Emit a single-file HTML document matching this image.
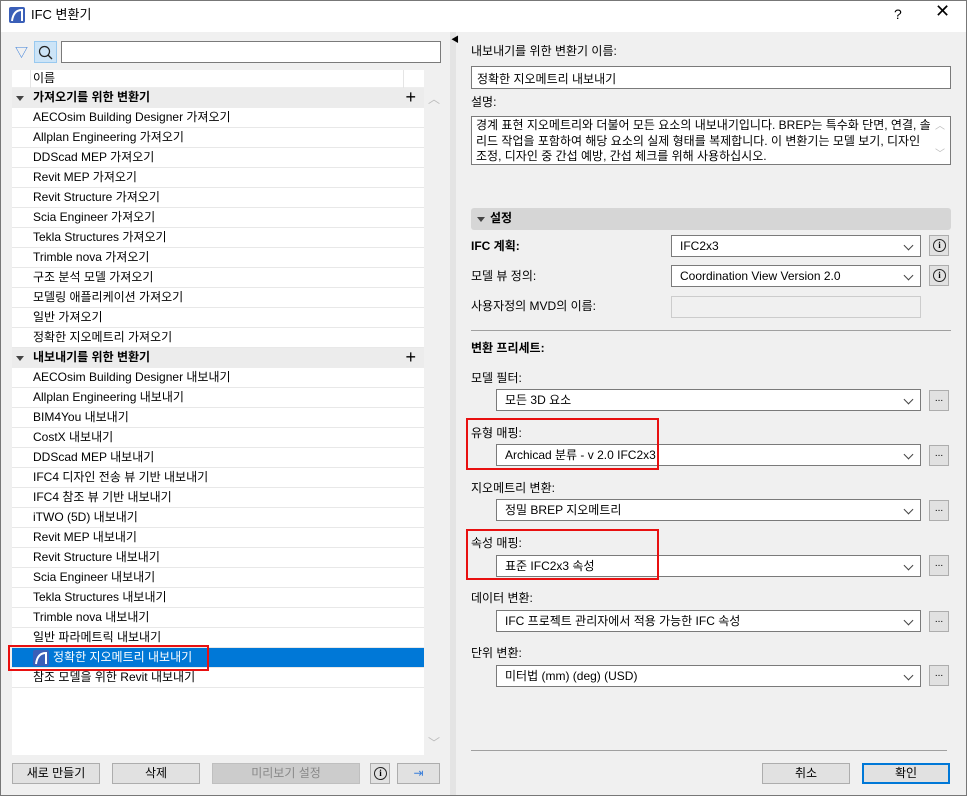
<!DOCTYPE html>
<html><head><meta charset="utf-8"><style>
*{box-sizing:border-box;margin:0;padding:0}
body{width:967px;height:796px;background:#f0f0f0;font-family:"Liberation Sans","Noto Sans CJK KR",sans-serif;font-size:12px;color:#000;position:relative;overflow:hidden}
.frame{position:absolute;left:0;top:0;width:967px;height:796px;border:1px solid #777;pointer-events:none}
.a{position:absolute}
.t{position:absolute;white-space:nowrap;line-height:14px}
.inp{position:absolute;background:#fff;border:1px solid #7a7a7a}
.sel{position:absolute;background:#fff;border:1px solid #7a7a7a;padding:4px 0 0 8px;line-height:13px;white-space:nowrap}
.sel:after{content:"";position:absolute;right:8px;top:6px;width:6px;height:6px;border-right:1px solid #444;border-bottom:1px solid #444;transform:rotate(45deg)}
.btn{position:absolute;background:#e1e1e1;border:1px solid #adadad;text-align:center;line-height:19px}
.dot{position:absolute;background:#e1e1e1;border:1px solid #adadad;text-align:center;font-size:10px;line-height:16px;width:20px;height:21px}
.info{position:absolute;background:#e1e1e1;border:1px solid #adadad;width:20px;height:21px}
.info:after{content:"i";position:absolute;left:3px;top:3px;width:13px;height:13px;border:1.5px solid #222;border-radius:50%;box-sizing:border-box;font:bold 9px "Liberation Serif",serif;text-align:center;line-height:10px}
.row{position:absolute;left:12px;width:412px;height:20px;border-bottom:1px solid #e8e8e8;padding-left:21px;line-height:19px;white-space:nowrap}
.grp{position:absolute;left:12px;width:412px;height:20px;background:#ececec;font-weight:bold;padding-left:21px;line-height:19px}
.grp:before{content:"";position:absolute;left:4px;top:8px;border:4px solid transparent;border-top:5px solid #444}
.plus{position:absolute;right:8px;top:0;font-weight:normal;font-size:18px;line-height:18px}
.red{position:absolute;border:2px solid #e81010}
</style></head><body>
<div class="a" style="left:0;top:0;width:967px;height:32px;background:#fff"></div>
<svg class="a" style="left:9px;top:7px" width="16" height="16"><rect width="16" height="16" rx="2" fill="#3a5fb8"/><path d="M3 14 C4 6 8 3 13 3 L13 14" fill="none" stroke="#fff" stroke-width="2"/></svg>
<div class="t" style="left:31px;top:8px;font-size:13px">IFC 변환기</div>
<div class="t" style="left:894px;top:7px;font-size:14px">?</div>
<div class="t" style="left:935px;top:4px;font-size:18px">✕</div>

<div class="t" style="left:15px;top:46px;color:#3b7fd9;font-size:13px">▽</div>
<div class="a" style="left:34px;top:41px;width:23px;height:22px;background:#cce4f7;border:1px solid #99c9ef"></div>
<svg class="a" style="left:38px;top:45px" width="16" height="16"><circle cx="6.5" cy="6.5" r="5" fill="none" stroke="#222" stroke-width="1.2"/><path d="M10 10 L14 14" stroke="#222" stroke-width="1.3"/></svg>
<div class="inp" style="left:61px;top:41px;width:380px;height:22px"></div>

<div class="a" style="left:12px;top:70px;width:412px;height:685px;background:#fff"></div>
<div class="a" style="left:424px;top:88px;width:16px;height:667px;background:#f0f0f0"></div>
<div class="t" style="left:428px;top:92px;color:#bbb">︿</div>
<div class="t" style="left:428px;top:736px;color:#bbb">﹀</div>
<div class="a" style="left:12px;top:70px;width:412px;height:18px;border-bottom:1px solid #eee"></div>
<div class="a" style="left:30px;top:70px;width:1px;height:18px;background:#e5e5e5"></div>
<div class="a" style="left:403px;top:70px;width:1px;height:18px;background:#e5e5e5"></div>
<div class="t" style="left:33px;top:71px">이름</div>

<div class="grp" style="top:88px">가져오기를 위한 변환기<span class="plus">+</span></div>
<div class="row" style="top:108px">AECOsim Building Designer 가져오기</div>
<div class="row" style="top:128px">Allplan Engineering 가져오기</div>
<div class="row" style="top:148px">DDScad MEP 가져오기</div>
<div class="row" style="top:168px">Revit MEP 가져오기</div>
<div class="row" style="top:188px">Revit Structure 가져오기</div>
<div class="row" style="top:208px">Scia Engineer 가져오기</div>
<div class="row" style="top:228px">Tekla Structures 가져오기</div>
<div class="row" style="top:248px">Trimble nova 가져오기</div>
<div class="row" style="top:268px">구조 분석 모델 가져오기</div>
<div class="row" style="top:288px">모델링 애플리케이션 가져오기</div>
<div class="row" style="top:308px">일반 가져오기</div>
<div class="row" style="top:328px">정확한 지오메트리 가져오기</div>
<div class="grp" style="top:348px">내보내기를 위한 변환기<span class="plus">+</span></div>
<div class="row" style="top:368px">AECOsim Building Designer 내보내기</div>
<div class="row" style="top:388px">Allplan Engineering 내보내기</div>
<div class="row" style="top:408px">BIM4You 내보내기</div>
<div class="row" style="top:428px">CostX 내보내기</div>
<div class="row" style="top:448px">DDScad MEP 내보내기</div>
<div class="row" style="top:468px">IFC4 디자인 전송 뷰 기반 내보내기</div>
<div class="row" style="top:488px">IFC4 참조 뷰 기반 내보내기</div>
<div class="row" style="top:508px">iTWO (5D) 내보내기</div>
<div class="row" style="top:528px">Revit MEP 내보내기</div>
<div class="row" style="top:548px">Revit Structure 내보내기</div>
<div class="row" style="top:568px">Scia Engineer 내보내기</div>
<div class="row" style="top:588px">Tekla Structures 내보내기</div>
<div class="row" style="top:608px">Trimble nova 내보내기</div>
<div class="row" style="top:628px">일반 파라메트릭 내보내기</div>
<div class="row" style="top:648px;background:#0078d7;color:#fff;padding-left:41px">정확한 지오메트리 내보내기</div>
<svg class="a" style="left:33px;top:650px" width="16" height="16"><rect width="16" height="16" rx="2" fill="#3a5fb8"/><path d="M3 14 C4 6 8 3 13 3 L13 14" fill="none" stroke="#fff" stroke-width="2"/></svg>
<div class="red" style="left:8px;top:645px;width:201px;height:26px"></div>
<div class="row" style="top:668px">참조 모델을 위한 Revit 내보내기</div>

<div class="btn" style="left:12px;top:763px;width:88px;height:21px">새로 만들기</div>
<div class="btn" style="left:112px;top:763px;width:88px;height:21px">삭제</div>
<div class="btn" style="left:212px;top:763px;width:148px;height:21px;background:#ccc;border-color:#bfbfbf;color:#888">미리보기 설정</div>
<div class="info" style="left:370px;top:763px"></div>
<div class="btn" style="left:397px;top:763px;width:43px;height:21px;color:#3b7fd9">⇥</div>

<div class="a" style="left:450px;top:32px;width:6px;height:764px;background:#e4e4e4"></div>
<div class="t" style="left:451px;top:33px;font-size:8px">◀</div>

<div class="t" style="left:471px;top:44px">내보내기를 위한 변환기 이름:</div>
<div class="inp" style="left:471px;top:66px;width:480px;height:23px;padding:3px 0 0 5px">정확한 지오메트리 내보내기</div>
<div class="t" style="left:471px;top:95px">설명:</div>
<div class="inp" style="left:471px;top:116px;width:480px;height:49px;padding:1px 0 0 4px;line-height:15.5px;white-space:nowrap;overflow:hidden">경계 표현 지오메트리와 더불어 모든 요소의 내보내기입니다. BREP는 특수화 단면, 연결, 솔<br>리드 작업을 포함하여 해당 요소의 실제 형태를 복제합니다. 이 변환기는 모델 보기, 디자인<br>조정, 디자인 중 간섭 예방, 간섭 체크를 위해 사용하십시오.</div>
<div class="t" style="left:935px;top:120px;color:#bbb;font-size:10px">︿</div>
<div class="t" style="left:935px;top:148px;color:#bbb;font-size:10px">﹀</div>

<div class="a" style="left:471px;top:208px;width:480px;height:22px;background:#d6d6d6;border-radius:3px"></div>
<div class="a" style="left:477px;top:217px;border:4px solid transparent;border-top:5px solid #444"></div>
<div class="t" style="left:490px;top:211px;font-weight:bold">설정</div>

<div class="t" style="left:471px;top:239px;font-weight:bold">IFC 계획:</div>
<div class="sel" style="left:671px;top:235px;width:250px;height:22px">IFC2x3</div>
<div class="info" style="left:929px;top:235px"></div>
<div class="t" style="left:471px;top:269px">모델 뷰 정의:</div>
<div class="sel" style="left:671px;top:265px;width:250px;height:22px">Coordination View Version 2.0</div>
<div class="info" style="left:929px;top:265px"></div>
<div class="t" style="left:471px;top:299px">사용자정의 MVD의 이름:</div>
<div class="a" style="left:671px;top:296px;width:250px;height:22px;border:1px solid #ccc;background:#f0f0f0"></div>
<div class="a" style="left:471px;top:330px;width:480px;height:1px;background:#a0a0a0"></div>
<div class="t" style="left:471px;top:341px;font-weight:bold">변환 프리세트:</div>

<div class="t" style="left:471px;top:371px">모델 필터:</div>
<div class="sel" style="left:496px;top:389px;width:425px;height:22px">모든 3D 요소</div>
<div class="dot" style="left:929px;top:390px">...</div>
<div class="t" style="left:471px;top:426px">유형 매핑:</div>
<div class="sel" style="left:496px;top:444px;width:425px;height:22px">Archicad 분류 - v 2.0 IFC2x3</div>
<div class="dot" style="left:929px;top:445px">...</div>
<div class="red" style="left:466px;top:418px;width:193px;height:52px"></div>
<div class="t" style="left:471px;top:481px">지오메트리 변환:</div>
<div class="sel" style="left:496px;top:499px;width:425px;height:22px">정밀 BREP 지오메트리</div>
<div class="dot" style="left:929px;top:500px">...</div>
<div class="t" style="left:471px;top:536px">속성 매핑:</div>
<div class="sel" style="left:496px;top:555px;width:425px;height:22px">표준 IFC2x3 속성</div>
<div class="dot" style="left:929px;top:555px">...</div>
<div class="red" style="left:466px;top:529px;width:193px;height:51px"></div>
<div class="t" style="left:471px;top:591px">데이터 변환:</div>
<div class="sel" style="left:496px;top:610px;width:425px;height:22px">IFC 프로젝트 관리자에서 적용 가능한 IFC 속성</div>
<div class="dot" style="left:929px;top:611px">...</div>
<div class="t" style="left:471px;top:646px">단위 변환:</div>
<div class="sel" style="left:496px;top:665px;width:425px;height:22px">미터법 (mm) (deg) (USD)</div>
<div class="dot" style="left:929px;top:665px">...</div>

<div class="a" style="left:471px;top:750px;width:476px;height:1px;background:#a0a0a0"></div>
<div class="btn" style="left:762px;top:763px;width:88px;height:21px">취소</div>
<div class="btn" style="left:862px;top:763px;width:88px;height:21px;border:2px solid #0078d7;line-height:17px">확인</div>
<div class="frame"></div>
</body></html>
